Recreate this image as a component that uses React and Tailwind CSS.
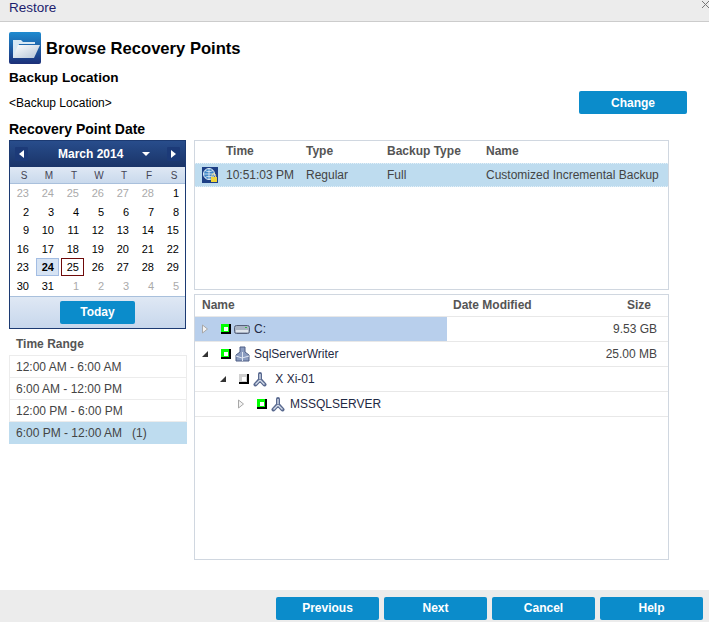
import React from 'react';

const prevDays = [23, 24, 25, 26, 27, 28];
const nextDays = [1, 2, 3, 4, 5];
const monthDays = Array.from({ length: 31 }, (_, i) => i + 1);
const ranges = ['12:00 AM - 6:00 AM', '6:00 AM - 12:00 PM', '12:00 PM - 6:00 PM'];

const ActionButton = ({ label, className = 'w-[103px]' }) => (
  <button
    type="button"
    className={`h-[23px] rounded-[2px] bg-[#0b8ccb] text-[12px] font-bold text-white ${className}`}
  >
    {label}
  </button>
);

const FolderIcon = () => (
  <svg width="32" height="32" viewBox="0 0 32 32" className="shrink-0">
    <defs>
      <linearGradient id="folderBg" x1="0" y1="0" x2="0" y2="1">
        <stop offset="0" stopColor="#1f8bd0" />
        <stop offset="1" stopColor="#1c2f78" />
      </linearGradient>
      <linearGradient id="folderFront" x1="0" y1="0" x2="1" y2="1">
        <stop offset="0" stopColor="#ffffff" />
        <stop offset="1" stopColor="#b4c4d6" />
      </linearGradient>
    </defs>
    <rect width="32" height="32" rx="2" fill="url(#folderBg)" />
    <path d="M4 26V8h8l2 2h12v2H10L6 26z" fill="#d8e8f4" />
    <path d="M9 13h22l-6 13H4z" fill="url(#folderFront)" />
  </svg>
);

const GlobeLockIcon = () => (
  <svg width="16" height="16" viewBox="0 0 16 16" className="shrink-0">
    <rect width="16" height="16" fill="#1d3f86" />
    <circle cx="7" cy="7" r="5.5" fill="#3e86c6" stroke="#e4eef7" />
    <path d="M1.500 7h11M7 1.500v11M3 3.500c2.500 1.500 5.500 1.500 8 0M3 10.500c2.500-1.500 5.500-1.500 8 0" stroke="#e4eef7" strokeWidth="0.8" fill="none" />
    <path d="M10 10V8.500a1.800 1.800 0 0 1 3.600 0V10" stroke="#f4e79a" fill="none" />
    <rect x="9" y="10" width="6" height="5" fill="#f0d53c" />
  </svg>
);

const CheckBox = ({ color = '#00ff00' }) => (
  <span
    className="flex h-[10px] w-[10px] shrink-0 items-end justify-end border-r-2 border-b-2 border-r-black border-b-black pr-[1px] pb-[1px]"
    style={{ backgroundColor: color }}
  >
    <span className="h-[4px] w-[4px] bg-white" />
  </span>
);

const TriangleOpen = () => (
  <svg width="8" height="8" viewBox="0 0 8 8" className="shrink-0">
    <path d="M7 1v6H1z" fill="#333" />
  </svg>
);

const TriangleClosed = () => (
  <svg width="8" height="10" viewBox="0 0 8 10" className="shrink-0">
    <path d="M1.500 1l5 4-5 4z" fill="#f4f4f4" stroke="#a8a8a8" />
  </svg>
);

const DriveIcon = () => (
  <svg width="16" height="9" viewBox="0 0 16 9" className="shrink-0">
    <rect x="0.500" y="0.500" width="15" height="8" rx="2" fill="#a9b4c4" stroke="#55607a" />
    <rect x="2" y="5" width="12" height="2" fill="#dfe5ec" />
    <rect x="11" y="2" width="2" height="1" fill="#39b54a" />
  </svg>
);

const WriterIcon = () => (
  <svg width="15" height="16" viewBox="0 0 15 16" className="shrink-0">
    <path d="M5 1h5v5l4 3v6H1V9l4-3z" fill="#8b9cc0" stroke="#4f5f85" />
    <path d="M7.500 6v9M1 10l6 2 7-2" stroke="#dfe6f2" fill="none" />
  </svg>
);

const ComponentIcon = () => (
  <svg width="14" height="15" viewBox="0 0 14 15" className="shrink-0">
    <path d="M7 2v5.500M7 7.500l-4.500 5M7 7.500l4.500 5" stroke="#59698f" strokeWidth="4" strokeLinecap="round" fill="none" />
    <path d="M7 2v5M7 8l-4.500 4.500M7 8l4.500 4.500" stroke="#d3dbe9" strokeWidth="1.400" fill="none" />
  </svg>
);

const Calendar = () => (
  <div className="border border-[#1c3a72]">
    <div className="flex h-[26px] items-center bg-gradient-to-b from-[#284d8c] to-[#1a3468] pr-[5px] pl-[5px]">
      <span className="flex h-[14px] w-[13px] items-center justify-center rounded-[1px] bg-[#1c3a78] text-white">
        <svg width="5" height="8" viewBox="0 0 5 8"><path d="M5 0v8L0 4z" fill="#fff" /></svg>
      </span>
      <span className="ml-[30px] text-[12px] font-bold text-white">March 2014</span>
      <span className="ml-[19px] flex items-center">
        <svg width="8" height="4" viewBox="0 0 8 4"><path d="M0 0h8L4 4z" fill="#fff" /></svg>
      </span>
      <span className="ml-auto flex h-[14px] w-[13px] items-center justify-center rounded-[1px] bg-[#1c3a78] text-white">
        <svg width="5" height="8" viewBox="0 0 5 8"><path d="M0 0v8l5-4z" fill="#fff" /></svg>
      </span>
    </div>
    <div className="grid h-[17px] grid-cols-7 items-center border-b border-[#a9c0dc] bg-gradient-to-b from-[#dfe8f4] to-[#c9d9ec] text-center text-[10px] text-[#445]">
      {['S', 'M', 'T', 'W', 'T', 'F', 'S'].map((d, i) => (
        <span key={i} className="pl-[3px]">{d}</span>
      ))}
    </div>
    <div className="grid grid-cols-7 grid-rows-[repeat(6,18.6px)] bg-white text-[11px] leading-[18px] text-black">
      {prevDays.map((d) => (
        <span key={`p${d}`} className="pr-[6px] text-right text-[#aaa]">{d}</span>
      ))}
      {monthDays.map((d) => (
        <span
          key={d}
          className={
            d === 24
              ? 'mx-[1px] flex h-[18px] items-center justify-end border border-[#a3bde3] bg-[#d6e3f3] pr-[4px] font-bold'
              : d === 25
                ? 'mx-[1px] flex h-[18px] items-center justify-end border border-[#6f0a0a] pr-[4px]'
                : 'pr-[6px] text-right'
          }
        >
          {d}
        </span>
      ))}
      {nextDays.map((d) => (
        <span key={`n${d}`} className="pr-[6px] text-right text-[#aaa]">{d}</span>
      ))}
    </div>
    <div className="flex h-[32px] items-center justify-center border-t border-[#a9c0dc] bg-gradient-to-b from-[#dfe8f4] to-[#c7d7ec]">
      <ActionButton label="Today" className="w-[75px]" />
    </div>
  </div>
);

const TreeRow = ({ indent, open, check, icon, name, size, selected }) => (
  <div className="flex h-[25px] items-center border-b border-[#e8e8e8] text-[12px] text-[#333]">
    <div
      className={`flex h-full w-[252px] items-center ${selected ? 'bg-[#b8cfec]' : ''}`}
      style={{ paddingLeft: indent }}
    >
      <span className="flex w-[20px] shrink-0 items-center">{open ? <TriangleOpen /> : <TriangleClosed />}</span>
      <CheckBox color={check} />
      <span className="ml-[3px] flex w-[16px] justify-center">{icon}</span>
      <span className="ml-[4px] whitespace-pre text-[#1f2a44]">{name}</span>
    </div>
    <span className="flex-1 pr-[11px] text-right text-[#444]">{size}</span>
  </div>
);

export default function App() {
  return (
    <div className="flex h-[622px] w-[709px] flex-col overflow-hidden bg-white font-['Liberation_Sans',Arial,sans-serif]">
      <div className="flex h-[22px] shrink-0 items-start justify-between border-b border-[#cccccc] bg-[#ececec] pl-[9px]">
        <span className="text-[13.5px] leading-[15px] text-[#1c1c6e]">Restore</span>
        <svg width="7" height="7" viewBox="0 0 7 7" className="mt-[1px]">
          <path d="M0 0l7 7M7 0L0 7" stroke="#777" />
        </svg>
      </div>

      <div className="flex min-h-0 flex-1 flex-col pt-[10px] pl-[9px]">
        <div className="flex items-center gap-[5px]">
          <FolderIcon />
          <h1 className="mt-[3px] text-[16.6px] font-bold text-black">Browse Recovery Points</h1>
        </div>
        <div className="mt-[6px] text-[13.6px] leading-[16px] font-bold text-black">Backup Location</div>
        <div className="mt-[5px] flex items-center justify-between pr-[22px]">
          <span className="text-[12px] text-black">&lt;Backup Location&gt;</span>
          <ActionButton label="Change" className="w-[108px]" />
        </div>
        <div className="mt-[7px] text-[14px] leading-[16px] font-bold text-black">Recovery Point Date</div>

        <div className="mt-[3px] flex gap-[8px]">
          <div className="flex w-[177px] shrink-0 flex-col">
            <Calendar />
            <div className="mt-[8px] pl-[7px] text-[12px] leading-[14px] font-bold text-[#555]">Time Range</div>
            <div className="mt-[4px] -mr-[1px] border-t border-[#ececec] text-[12px] text-[#444]">
              {ranges.map((r) => (
                <div key={r} className="flex h-[22px] items-center border-x border-b border-[#ececec] pt-[2px] pl-[6px]">{r}</div>
              ))}
              <div className="flex h-[22px] items-center whitespace-pre bg-[#bedcef] pt-[1px] pl-[7px]">6:00 PM - 12:00 AM   (1)</div>
            </div>
          </div>

          <div className="flex w-[475px] shrink-0 flex-col gap-[4px]">
            <div className="h-[150px] border border-[#d0d7e0]">
              <div className="grid h-[22px] grid-cols-[31px_80px_81px_99px_1fr] items-center pb-[2px] text-[12px] font-bold text-[#555]">
                <span />
                <span>Time</span>
                <span>Type</span>
                <span>Backup Type</span>
                <span>Name</span>
              </div>
              <div className="grid h-[24px] grid-cols-[31px_80px_81px_99px_1fr] items-center border-y border-dotted border-[#e4f0f8] bg-[#bedcef] text-[12px] text-[#444]">
                <span className="pl-[7px]"><GlobeLockIcon /></span>
                <span>10:51:03 PM</span>
                <span>Regular</span>
                <span>Full</span>
                <span className="whitespace-nowrap">Customized Incremental Backup</span>
              </div>
            </div>

            <div className="h-[266px] border border-[#d0d7e0]">
              <div className="flex h-[22px] items-center border-b border-[#e8e8e8] pb-[2px] text-[12px] font-bold text-[#555]">
                <span className="w-[258px] pl-[7px]">Name</span>
                <span>Date Modified</span>
                <span className="flex-1 pr-[17px] text-right">Size</span>
              </div>
              <TreeRow indent={6} check="#00ff00" icon={<DriveIcon />} name="C:" size="9.53 GB" selected />
              <TreeRow indent={6} open check="#00ff00" icon={<WriterIcon />} name="SqlServerWriter" size="25.00 MB" />
              <TreeRow indent={24} open check="#d0d0d0" icon={<ComponentIcon />} name=" X Xi-01" />
              <TreeRow indent={42} check="#00ff00" icon={<ComponentIcon />} name="MSSQLSERVER" />
            </div>
          </div>
        </div>
      </div>

      <div className="flex h-[32px] shrink-0 items-center justify-end gap-[5px] bg-[#ececec] pt-[4px] pr-[6px]">
        <ActionButton label="Previous" />
        <ActionButton label="Next" />
        <ActionButton label="Cancel" />
        <ActionButton label="Help" />
      </div>
    </div>
  );
}
